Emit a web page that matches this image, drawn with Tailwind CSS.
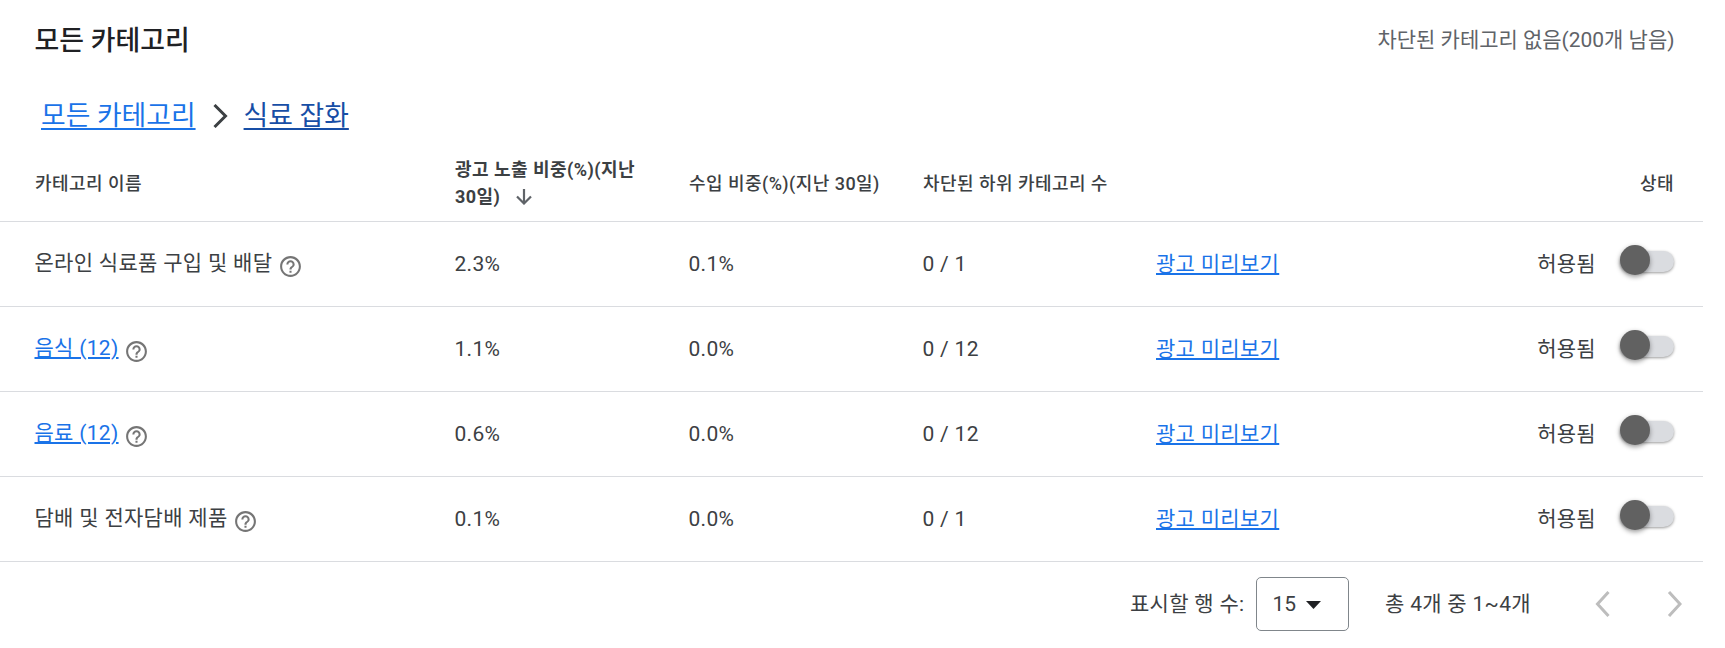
<!DOCTYPE html>
<html lang="ko">
<head>
  <meta charset="UTF-8" />
  <meta name="viewport" content="width=device-width, initial-scale=1.0" />
  <title>모든 카테고리</title>
  <script src="https://cdn.jsdelivr.net/npm/@tailwindcss/browser@4"></script>
  <style>
    body {
      font-family: Roboto, 'Noto Sans CJK KR', sans-serif;
    }
  </style>
</head>
<body class="bg-white h-screen overflow-hidden text-[21px] text-[#3c4043]">
  <main class="w-[1703px]">
    <header class="flex items-center justify-between h-20 pt-[3px] pl-[34.5px] pr-[28.5px]">
      <h1 class="text-[26.9px] font-medium text-[#202124]">모든 카테고리</h1>
      <p class="-mt-px text-[#5f6368] tracking-[-0.02px]">차단된 카테고리 없음(200개 남음)</p>
    </header>

    <nav class="flex items-center h-[70px] pt-0.5 pl-[41px] text-[26.8px]">
      <a href="#" class="text-[#1a73e8] underline decoration-2 underline-offset-[3px]">모든 카테고리</a>
      <svg class="w-[15px] h-6 ml-[17px] mr-4" viewBox="0 0 15 24" fill="none" stroke="#3c4043" stroke-width="3"><path d="M1.500 1 12.500 12 1.500 23" /></svg>
      <a href="#" class="text-[#174ea6] underline decoration-2 underline-offset-[3px]">식료 잡화</a>
    </nav>

    <section>
      <div class="grid grid-cols-[420px_234px_234px_233px_1fr] items-center h-[72px] pl-[35px] pr-[29px] pb-1 border-b border-[#dadce0] text-[18px] leading-[27px] tracking-[0.45px] font-medium">
        <div>카테고리 이름</div>
        <div class="-mt-0.5 font-bold">광고 노출 비중(%)(지난<br />
          <span class="flex items-center">30일)
            <svg class="w-4 h-4 mt-0.5 ml-4" viewBox="0 0 16 16" fill="none" stroke="#5f6368" stroke-width="2.2"><path d="M8 0V14.500M1 7.500 8 14.500 15 7.500" /></svg>
          </span>
        </div>
        <div>수입 비중(%)(지난 30일)</div>
        <div>차단된 하위 카테고리 수</div>
        <div class="text-right">상태</div>
      </div>
      <div id="rows" class="tracking-[0.3px]"></div>
    </section>

    <footer class="flex items-center h-[85px] pl-[1130px] tracking-[0.3px]">
      <span class="w-[126px] whitespace-nowrap">표시할 행 수:</span>
      <button class="flex items-center w-[93px] h-[54px] -mt-0.5 pt-0.5 pl-[15.5px] border border-[#80868b] rounded-[5px] tracking-normal">
        15
        <svg class="w-[15px] h-2 ml-2.5" viewBox="0 0 15 8" fill="#202124"><path d="M0 0H15L7.500 8Z" /></svg>
      </button>
      <span class="ml-9 w-[210px] whitespace-nowrap">총 4개 중 1~4개</span>
      <svg class="w-[15px] h-7 -mt-0.5" viewBox="0 0 15 28" fill="none" stroke="#bdbdbd" stroke-width="3"><path d="M13.500 2 2.500 14 13.500 26" /></svg>
      <svg class="w-[15px] h-7 -mt-0.5 ml-[57px]" viewBox="0 0 15 28" fill="none" stroke="#bdbdbd" stroke-width="3"><path d="M2 2 13 14 2 26" /></svg>
    </footer>
  </main>

  <script>
    const categories = [
      { name: '온라인 식료품 구입 및 배달', link: false, impressions: '2.3%', revenue: '0.1%', blocked: '0 / 1' },
      { name: '음식 (12)', link: true, impressions: '1.1%', revenue: '0.0%', blocked: '0 / 12' },
      { name: '음료 (12)', link: true, impressions: '0.6%', revenue: '0.0%', blocked: '0 / 12' },
      { name: '담배 및 전자담배 제품', link: false, impressions: '0.1%', revenue: '0.0%', blocked: '0 / 1' },
    ];

    document.getElementById('rows').innerHTML = categories.map(item => `
      <div class="grid grid-cols-[420px_234px_234px_233.5px_1fr] items-center h-[85px] pt-0.5 pl-[34.5px] pr-[29px] border-b border-[#dadce0]">
        <div class="flex items-center -mt-[3px]">
          ${item.link ? `<a href="#" class="text-[#1a73e8] underline decoration-2 underline-offset-2">${item.name}</a>` : `<span>${item.name}</span>`}
          <svg class="w-[25px] h-[25px] ml-[5.5px] mt-1.5" viewBox="0 0 24 24" fill="#757575"><path d="M11 18h2v-2h-2v2zm1-16C6.480 2 2 6.480 2 12s4.480 10 10 10 10-4.480 10-10S17.520 2 12 2zm0 18c-4.410 0-8-3.590-8-8s3.590-8 8-8 8 3.590 8 8-3.590 8-8 8zm0-14c-2.210 0-4 1.790-4 4h2c0-1.100.900-2 2-2s2 .900 2 2c0 2-3 1.750-3 5h2c0-2.250 3-2.500 3-5 0-2.210-1.790-4-4-4z" /></svg>
        </div>
        <div>${item.impressions}</div>
        <div>${item.revenue}</div>
        <div>${item.blocked}</div>
        <div class="flex items-center justify-between">
          <a href="#" class="-mt-px text-[#1a73e8] underline decoration-2 underline-offset-2">광고 미리보기</a>
          <div class="flex items-center">
            <span class="-mt-px">허용됨</span>
            <button class="flex items-center w-[54px] h-[21px] ml-6 -mt-2 rounded-full bg-[#dadce0] shadow-[0_1px_3px_rgba(0,0,0,0.4)]">
              <span class="w-[30px] h-[30px] -mt-0.5 shrink-0 rounded-full bg-[#616161] shadow-[0_2px_5px_rgba(0,0,0,0.4)]"></span>
            </button>
          </div>
        </div>
      </div>`).join('');
  </script>
</body>
</html>
